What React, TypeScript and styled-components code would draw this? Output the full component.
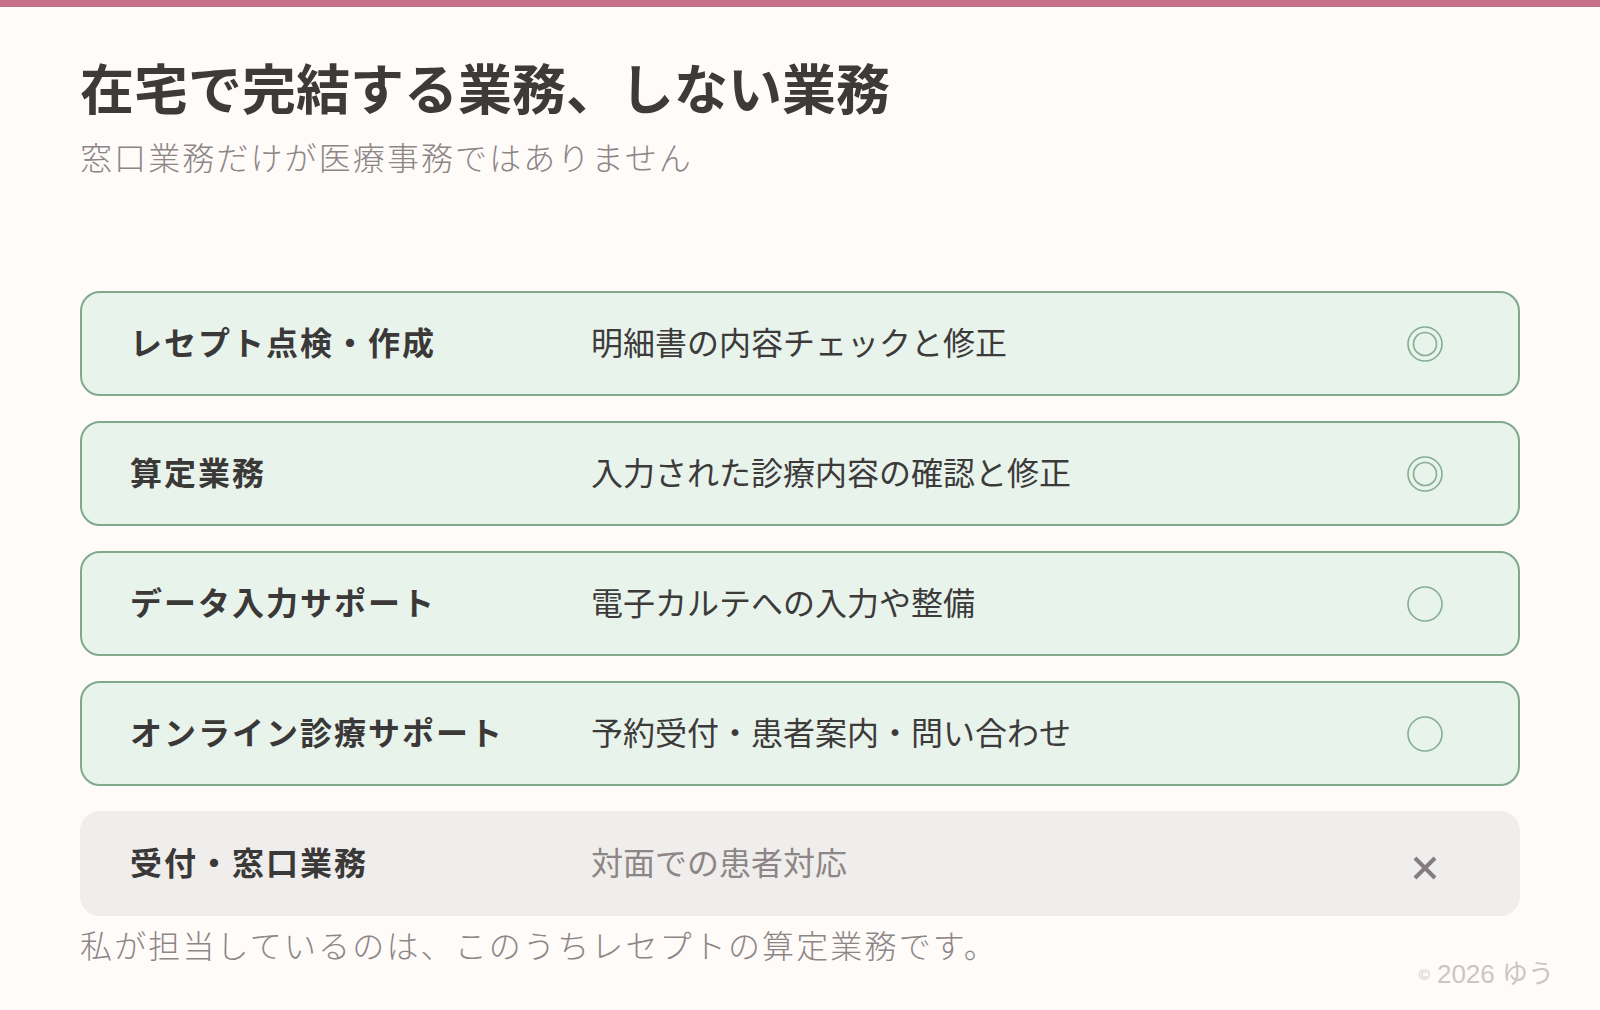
import styled, { createGlobalStyle } from 'styled-components';

type Mark = 'double' | 'single' | 'cross';

interface TaskRowData {
  label: string;
  desc: string;
  mark: Mark;
}

const tasks: TaskRowData[] = [
  { label: 'レセプト点検・作成', desc: '明細書の内容チェックと修正', mark: 'double' },
  { label: '算定業務', desc: '入力された診療内容の確認と修正', mark: 'double' },
  { label: 'データ入力サポート', desc: '電子カルテへの入力や整備', mark: 'single' },
  { label: 'オンライン診療サポート', desc: '予約受付・患者案内・問い合わせ', mark: 'single' },
  { label: '受付・窓口業務', desc: '対面での患者対応', mark: 'cross' },
];

const GlobalStyle = createGlobalStyle`
  html, body {
    margin: 0;
    padding: 0;
    background: #fefbf9;
  }
  body {
    font-family: "Noto Sans CJK JP", "Noto Sans", sans-serif;
    color: #3b3838;
  }
`;

const Page = styled.div`
  position: relative;
  box-sizing: border-box;
  width: 1600px;
  height: 1010px;
  border-top: 7px solid #c5718a;
  padding: 49px 80px 0;
  display: flex;
  flex-direction: column;
  overflow: hidden;
`;

const Title = styled.h1`
  margin: 0;
  font-size: 54px;
  line-height: 62px;
  font-weight: 700;
  letter-spacing: 0;
  color: #3d3a3a;
`;

const Subtitle = styled.p`
  margin: 16px 0 0;
  font-size: 32px;
  line-height: 44px;
  font-weight: 300;
  letter-spacing: 2.1px;
  color: #8d8586;
`;

const List = styled.div`
  margin-top: 113px;
  display: flex;
  flex-direction: column;
  gap: 25px;
`;

const Row = styled.div<{ $muted: boolean }>`
  box-sizing: border-box;
  height: 105px;
  display: grid;
  grid-template-columns: 461px 1fr 60px;
  align-items: center;
  padding: 0 63px 0 48px;
  border-radius: 20px;
  border: 2px solid ${p => (p.$muted ? '#efeeed' : '#80a98b')};
  background: ${p => (p.$muted ? '#efeeed' : '#e8f3ec')};
`;

const Label = styled.div`
  padding-bottom: 6px;
  font-size: 32px;
  font-weight: 700;
  letter-spacing: 2px;
  color: #3b3838;
`;

const Desc = styled.div<{ $muted: boolean }>`
  padding-bottom: 6px;
  font-size: 32px;
  font-weight: 400;
  color: ${p => (p.$muted ? '#8d8586' : '#3d3a3a')};
`;

const MarkBox = styled.div`
  display: flex;
  align-items: center;
  justify-content: center;
`;

const Note = styled.p`
  margin: 6px 0 0;
  font-size: 32px;
  line-height: 44px;
  font-weight: 300;
  letter-spacing: 2.15px;
  color: #8d8586;
`;

const Copyright = styled.div`
  position: absolute;
  right: 46px;
  bottom: 20px;
  font-family: "Liberation Sans", "Noto Sans CJK JP", sans-serif;
  font-size: 26px;
  color: #cec4c6;

  small {
    font-size: 15px;
    margin-right: 7px;
    vertical-align: 3px;
  }
`;

function MarkIcon({ mark }: { mark: Mark }) {
  if (mark === 'cross') {
    return (
      <svg width="36" height="36" viewBox="0 0 36 36" style={{ marginTop: 8 }}>
        <path d="M8 8 L28 28 M28 8 L8 28" stroke="#857c80" strokeWidth="4" />
      </svg>
    );
  }
  return (
    <svg width="38" height="38" viewBox="0 0 38 38">
      <circle cx="19" cy="19" r="17" fill="none" stroke="#85ae91" strokeWidth="1.6" />
      {mark === 'double' && (
        <circle cx="19" cy="19" r="11.5" fill="none" stroke="#85ae91" strokeWidth="1.6" />
      )}
    </svg>
  );
}

export default function App() {
  return (
    <>
      <GlobalStyle />
      <Page>
        <Title>在宅で完結する業務、しない業務</Title>
        <Subtitle>窓口業務だけが医療事務ではありません</Subtitle>
        <List>
          {tasks.map(t => {
            const muted = t.mark === 'cross';
            return (
              <Row key={t.label} $muted={muted}>
                <Label>{t.label}</Label>
                <Desc $muted={muted}>{t.desc}</Desc>
                <MarkBox>
                  <MarkIcon mark={t.mark} />
                </MarkBox>
              </Row>
            );
          })}
        </List>
        <Note>私が担当しているのは、このうちレセプトの算定業務です。</Note>
        <Copyright>
          <small>©</small>2026 ゆう
        </Copyright>
      </Page>
    </>
  );
}
